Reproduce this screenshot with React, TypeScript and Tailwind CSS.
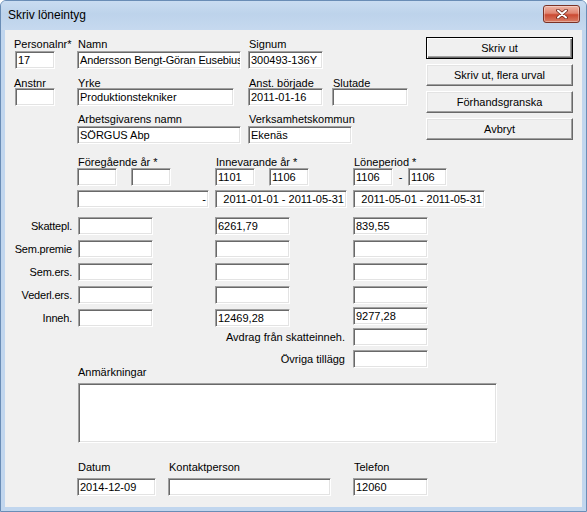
import type { ReactNode } from "react";

function Label({ children, className = "" }: { children: ReactNode; className?: string }) {
  return (
    <div className={`h-[13px] whitespace-nowrap text-[11px] leading-[13px] text-black ${className}`}>
      {children}
    </div>
  );
}

function Box({ value = "", right = false, className = "" }: { value?: string; right?: boolean; className?: string }) {
  return (
    <div
      className={`h-[18px] shrink-0 overflow-hidden whitespace-nowrap border border-t-[#a0a0a0] border-l-[#a0a0a0] border-r-white border-b-white bg-white px-[2px] text-[11px] leading-[16px] text-black shadow-[inset_1px_1px_0_#696969,inset_-1px_-1px_0_#e3e3e3] ${right ? "text-right" : ""} ${className}`}
    >
      {value}
    </div>
  );
}

function Button({ children, primary = false }: { children: ReactNode; primary?: boolean }) {
  return (
    <button
      type="button"
      className={
        primary
          ? "h-[22px] w-[147px] border border-black bg-[#f0f0f0] text-[11px] leading-[20px] text-black shadow-[inset_1px_1px_0_#ffffff,inset_-1px_-1px_0_#696969,inset_-2px_-2px_0_#a0a0a0]"
          : "h-[22px] w-[147px] border border-t-white border-l-white border-r-[#696969] border-b-[#696969] bg-[#f0f0f0] text-[11px] leading-[20px] text-black shadow-[inset_-1px_-1px_0_#a0a0a0,inset_1px_1px_0_#e3e3e3]"
      }
    >
      {children}
    </button>
  );
}

function AmountRow({ label, a = "", b = "", c = "", liftC = false }: { label: string; a?: string; b?: string; c?: string; liftC?: boolean }) {
  return (
    <div className="flex items-start">
      <div className="w-[67px] text-right text-[11px] leading-[18px] tracking-[-0.2px]">{label}</div>
      <Box value={a} className="ml-[6px] w-[75px]" />
      <Box value={b} className="ml-[62px] w-[75px]" />
      <Box value={c} className={`ml-[63px] w-[75px] ${liftC ? "-mt-[2px]" : ""}`} />
    </div>
  );
}

export default function App() {
  return (
    <div className="flex h-[512px] w-[587px] flex-col overflow-hidden rounded-t-[6px] border border-[#6a8db6] bg-[#c1d6ee] font-['Liberation_Sans',Arial,sans-serif]">
      {/* title bar */}
      <div className="flex h-[29px] shrink-0 items-start bg-[linear-gradient(to_bottom,#c9dcf1,#bdd3eb_45%,#c6d9ef)]">
        <div className="pl-[7px] pt-[6px] text-[12px] leading-[16px] text-black">Skriv löneintyg</div>
        <div className="ml-auto mr-[6px] mt-[4px] flex h-[18px] w-[37px] items-center justify-center rounded-[3px] border border-[#7a3226] bg-[linear-gradient(to_bottom,#eeb4a4,#e08571_45%,#cb4a32_55%,#d97e66)] shadow-[inset_0_0_0_1px_rgba(255,255,255,0.35)]">
          <svg width="12" height="10" viewBox="0 0 12 10">
            <path d="M2 1.5 L10 8.5 M10 1.5 L2 8.5" stroke="#6b2418" strokeWidth="3.6" strokeLinecap="round" />
            <path d="M2 1.5 L10 8.5 M10 1.5 L2 8.5" stroke="#ffffff" strokeWidth="2" strokeLinecap="round" />
          </svg>
        </div>
      </div>

      {/* client area */}
      <div className="mx-[4px] mb-[4px] flex-1 bg-[#f0f0f0] text-black">
        {/* top section */}
        <div className="flex pl-[9px] pt-[8px]">
          <div className="w-[412px]">
            <div className="flex items-start">
              <div className="w-[64px]">
                <Label>Personalnr*</Label>
                <Box value="17" className="ml-[1px] w-[40px]" />
              </div>
              <div className="w-[170px]">
                <Label>Namn</Label>
                <Box value="Andersson Bengt-Göran Eusebius" className="-ml-[1px] w-[164px] tracking-[-0.15px]" />
              </div>
              <div>
                <Label className="pl-[1px]">Signum</Label>
                <Box value="300493-136Y" className="w-[75px]" />
              </div>
            </div>

            <div className="mt-[8px] flex items-start">
              <div className="w-[64px]">
                <Label>Anstnr</Label>
                <Box className="-mt-[2px] ml-[1px] w-[40px]" />
              </div>
              <div className="w-[170px]">
                <Label>Yrke</Label>
                <Box value="Produktionstekniker" className="-mt-[2px] -ml-[1px] w-[157px]" />
              </div>
              <div className="w-[84px]">
                <Label className="pl-[1px]">Anst. började</Label>
                <Box value="2011-01-16" className="-mt-[2px] w-[75px]" />
              </div>
              <div>
                <Label className="pl-[1px]">Slutade</Label>
                <Box className="-mt-[2px] w-[76px]" />
              </div>
            </div>

            <div className="mt-[7px] flex items-start">
              <div className="w-[64px]" />
              <div className="w-[170px]">
                <Label>Arbetsgivarens namn</Label>
                <Box value="SÖRGUS Abp" className="-ml-[1px] w-[164px]" />
              </div>
              <div>
                <Label className="pl-[1px]">Verksamhetskommun</Label>
                <Box value="Ekenäs" className="w-[104px]" />
              </div>
            </div>
          </div>

          <div className="-mt-[1px] flex flex-col gap-[5px]">
            <Button primary>Skriv ut</Button>
            <Button>Skriv ut, flera urval</Button>
            <Button>Förhandsgranska</Button>
            <Button>Avbryt</Button>
          </div>
        </div>

        {/* period section */}
        <div className="mt-[12px] flex items-start pl-[72px]">
          <div className="w-[138px]">
            <Label className="pl-[1px]">Föregående år *</Label>
            <div className="-mt-[1px] flex">
              <Box className="w-[40px]" />
              <Box className="ml-[14px] w-[40px]" />
            </div>
          </div>
          <div className="w-[138px]">
            <Label className="pl-[1px]">Innevarande år *</Label>
            <div className="-mt-[1px] flex">
              <Box value="1101" className="w-[40px]" />
              <Box value="1106" className="ml-[14px] w-[40px]" />
            </div>
          </div>
          <div>
            <Label className="pl-[1px]">Löneperiod *</Label>
            <div className="-mt-[1px] flex items-center">
              <Box value="1106" className="w-[40px]" />
              <span className="w-[15px] text-center text-[11px] leading-[18px]">-</span>
              <Box value="1106" className="w-[39px]" />
            </div>
          </div>
        </div>

        <div className="mt-[4px] flex pl-[72px]">
          <Box value="-" right className="w-[132px]" />
          <Box value="2011-01-01 - 2011-05-31" right className="ml-[6px] w-[132px]" />
          <Box value="2011-05-01 - 2011-05-31" right className="ml-[6px] w-[132px]" />
        </div>

        {/* amounts */}
        <div className="mt-[9px] flex flex-col gap-[5px]">
          <AmountRow label="Skattepl." b="6261,79" c="839,55" />
          <AmountRow label="Sem.premie" />
          <AmountRow label="Sem.ers." />
          <AmountRow label="Vederl.ers." />
          <AmountRow label="Inneh." b="12469,28" c="9277,28" liftC />
        </div>
        <div className="mt-[1px] flex items-start">
          <div className="w-[340px] text-right text-[11px] leading-[18px]">Avdrag från skatteinneh.</div>
          <Box className="ml-[8px] w-[75px]" />
        </div>
        <div className="mt-[4px] flex items-start">
          <div className="w-[340px] text-right text-[11px] leading-[18px]">Övriga tillägg</div>
          <Box className="ml-[8px] w-[75px]" />
        </div>

        {/* remarks */}
        <div className="-mt-[2px] pl-[73px]">
          <Label>Anmärkningar</Label>
          <div className="mt-[4px] h-[60px] w-[419px] border border-t-[#a0a0a0] border-l-[#a0a0a0] border-r-white border-b-white bg-white shadow-[inset_1px_1px_0_#696969,inset_-1px_-1px_0_#e3e3e3]" />
        </div>

        {/* bottom row */}
        <div className="mt-[18px] flex items-start pl-[72px]">
          <div className="w-[91px]">
            <Label className="pl-[1px]">Datum</Label>
            <Box value="2014-12-09" className="mt-[4px] w-[79px]" />
          </div>
          <div className="w-[185px]">
            <Label className="pl-[1px]">Kontaktperson</Label>
            <Box className="mt-[4px] w-[163px]" />
          </div>
          <div>
            <Label className="pl-[1px]">Telefon</Label>
            <Box value="12060" className="mt-[4px] w-[75px]" />
          </div>
        </div>
      </div>
    </div>
  );
}
